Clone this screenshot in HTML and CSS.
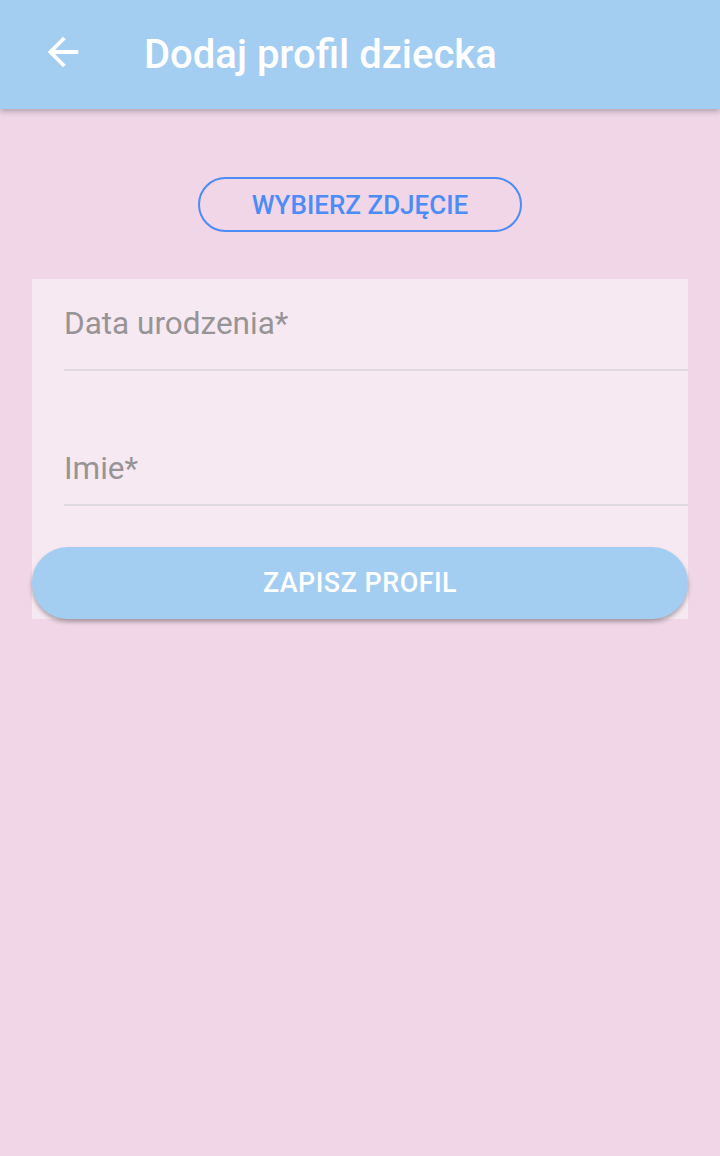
FILE: index.html
```html
<!DOCTYPE html>
<html lang="pl">
<head>
<meta charset="utf-8">
<title>Dodaj profil dziecka</title>
<link rel="stylesheet" href="styles.css">
</head>
<body>
<header class="appbar">
  <svg class="back" viewBox="0 0 24 24" width="46" height="46" aria-hidden="true">
    <path fill="#ffffff" d="M20 11H7.83l5.59-5.59L12 4l-8 8 8 8 1.41-1.41L7.83 13H20v-2z"/>
  </svg>
  <h1 class="title">Dodaj profil dziecka</h1>
</header>
<main class="content">
  <div class="photo-row">
    <button class="photo-btn" type="button">WYBIERZ ZDJĘCIE</button>
  </div>
  <form class="card">
    <div class="field field-date">
      <span class="label">Data urodzenia*</span>
    </div>
    <div class="field field-name">
      <span class="label">Imie*</span>
    </div>
    <button class="save-btn" type="button">ZAPISZ PROFIL</button>
  </form>
</main>
</body>
</html>
```
FILE: styles.css
```css
html, body {
  margin: 0;
  padding: 0;
}
body {
  width: 720px;
  min-height: 1156px;
  background: #f0d6e6;
  font-family: Roboto, "Noto Sans", "Liberation Sans", sans-serif;
}
.appbar {
  position: relative;
  z-index: 2;
  height: 109px;
  background: #a3cef1;
  display: flex;
  align-items: center;
  box-shadow: 0 2px 6px rgba(0, 0, 0, 0.28);
}
.back {
  display: block;
  margin-left: 40px;
  margin-top: -5px;
  flex: none;
}
.title {
  margin: 0 0 0 58px;
  font-size: 40px;
  line-height: 47px;
  font-weight: 500;
  color: #ffffff;
}
.content {
  display: flex;
  flex-direction: column;
}
.photo-row {
  display: flex;
  justify-content: center;
  padding-top: 68px;
}
.photo-btn {
  width: 324px;
  height: 55px;
  border: 2px solid #4b8cf6;
  border-radius: 28px;
  background: transparent;
  color: #4b8cf6;
  font-family: Roboto, "Noto Sans", "Liberation Sans", sans-serif;
  font-size: 26px;
  font-weight: 500;
  letter-spacing: 0;
  padding: 0;
}
.card {
  margin: 47px 32px 0 32px;
  background: #f7e9f2;
  display: flex;
  flex-direction: column;
}
.field {
  margin-left: 32px;
  border-bottom: 2px solid #dfdadd;
}
.label {
  display: block;
  font-size: 31.5px;
  line-height: 36px;
  color: #969495;
}
.field-date {
  padding: 27px 0 27px 0;
}
.field-name {
  margin-top: 80px;
  padding-bottom: 17px;
}
.save-btn {
  margin-top: 41px;
  height: 72px;
  border: none;
  border-radius: 36px;
  background: #a3cef1;
  color: #ffffff;
  font-family: Roboto, "Noto Sans", "Liberation Sans", sans-serif;
  font-size: 26.9px;
  font-weight: 500;
  letter-spacing: 0.5px;
  box-shadow: 0 3px 4px rgba(0, 0, 0, 0.3);
  padding: 0;
}
```
